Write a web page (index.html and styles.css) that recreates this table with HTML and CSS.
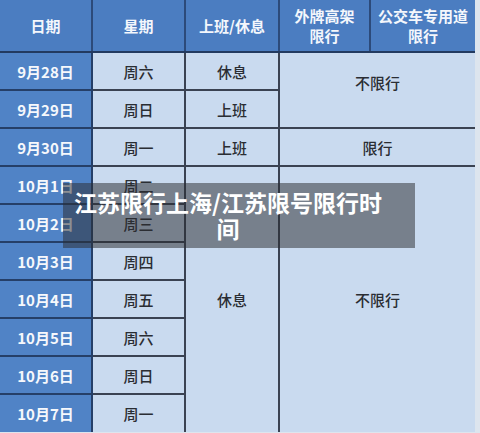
FILE: index.html
```html
<!DOCTYPE html>
<html lang="zh">
<head>
<meta charset="utf-8">
<link rel="stylesheet" href="styles.css">
</head>
<body>
<div class="page">
  <table class="plan">
    <colgroup>
      <col class="c1"><col class="c2"><col class="c3"><col class="c4"><col class="c5">
    </colgroup>
    <thead>
      <tr class="head">
        <th>日期</th>
        <th>星期</th>
        <th>上班/休息</th>
        <th>外牌高架<br>限行</th>
        <th>公交车专用道<br>限行</th>
      </tr>
    </thead>
    <tbody>
      <tr><td class="date">9月28日</td><td>周六</td><td>休息</td><td class="merge-top" colspan="2" rowspan="2">不限行</td></tr>
      <tr><td class="date">9月29日</td><td>周日</td><td>上班</td></tr>
      <tr><td class="date">9月30日</td><td>周一</td><td>上班</td><td colspan="2">限行</td></tr>
      <tr><td class="date">10月1日</td><td>周二</td><td rowspan="7">休息</td><td colspan="2" rowspan="7">不限行</td></tr>
      <tr><td class="date">10月2日</td><td>周三</td></tr>
      <tr><td class="date">10月3日</td><td>周四</td></tr>
      <tr><td class="date">10月4日</td><td>周五</td></tr>
      <tr><td class="date">10月5日</td><td>周六</td></tr>
      <tr><td class="date">10月6日</td><td>周日</td></tr>
      <tr><td class="date">10月7日</td><td>周一</td></tr>
    </tbody>
  </table>
  <div class="caption">江苏限行上海/江苏限号限行时间</div>
</div>
</body>
</html>
```

FILE: styles.css
```css
html, body {
  margin: 0;
  padding: 0;
}
body {
  width: 480px;
  height: 433px;
  overflow: hidden;
  background: #dde5ee;
  font-family: "Noto Sans CJK SC", "Noto Sans", sans-serif;
}
.page {
  position: relative;
  width: 480px;
  height: 433px;
  overflow: hidden;
}
.plan {
  width: 475px;
  table-layout: fixed;
  border-collapse: collapse;
  border-style: hidden;
}
.c1 { width: 92px; }
.c2 { width: 93px; }
.c3 { width: 94px; }
.c4 { width: 91px; }
.c5 { width: 105px; }

.plan th, .plan td {
  border: 2px solid #34405a;
  text-align: center;
  vertical-align: middle;
  padding: 0;
  font-size: 15px;
}
.plan th {
  background: #4b7dc1;
  color: #f4f7fc;
  font-weight: 700;
  font-size: 15px;
  line-height: 20px;
  border-color: #2c4a7a;
  border-bottom-color: #223a60;
}
.head { height: 52px; }
.plan tbody tr { height: 38px; }
.plan td {
  background: #c9daef;
  color: #2a2d33;
  font-weight: 500;
  border-color: #3a4252;
}
.plan td.date {
  background: #5083c6;
  color: #f6f8fc;
  font-weight: 700;
  border-color: #253f68;
}
.plan td.merge-top {
  padding-bottom: 16px;
}
.caption {
  position: absolute;
  left: 63px;
  top: 183px;
  width: 314px;
  padding: 6px 30px 7px 8px;
  background: rgba(44, 46, 50, 0.52);
  color: #ffffff;
  font-weight: 700;
  font-size: 23px;
  line-height: 26px;
  text-align: center;
}
```
